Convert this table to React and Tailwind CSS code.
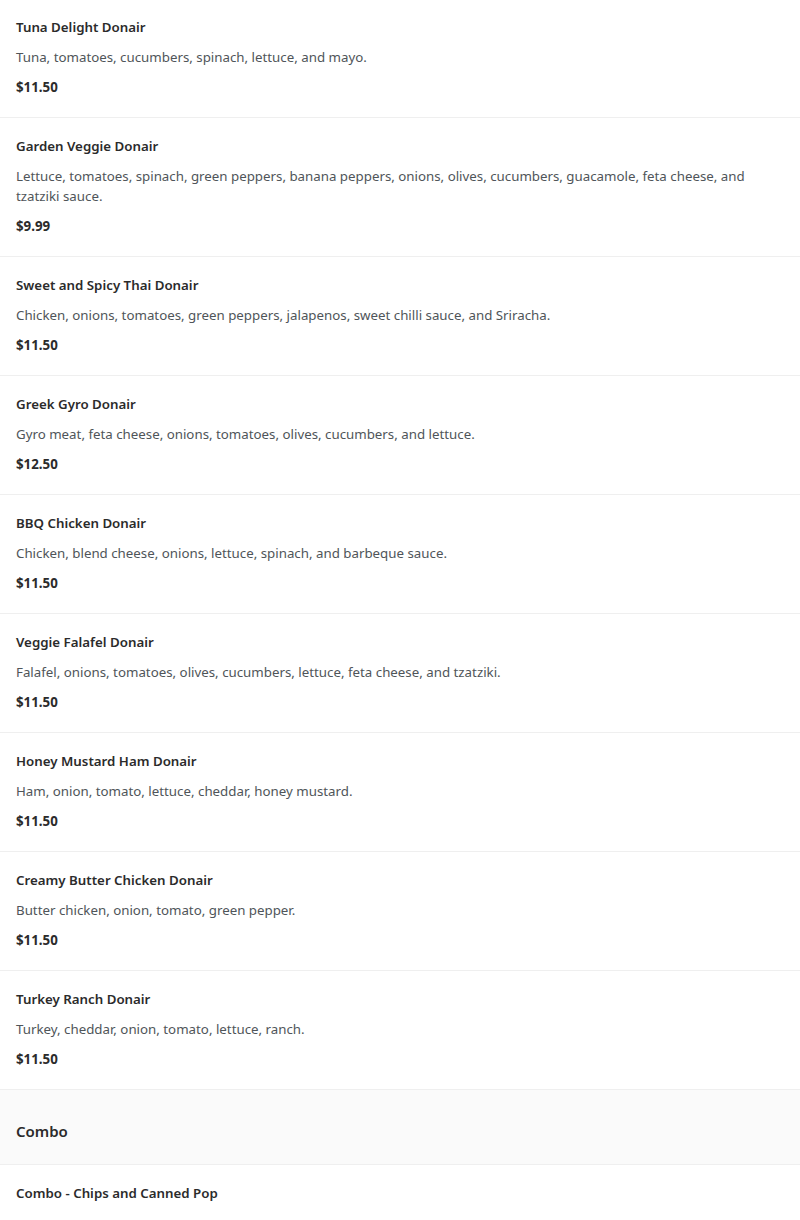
const items = [
  { name: "Tuna Delight Donair", desc: "Tuna, tomatoes, cucumbers, spinach, lettuce, and mayo.", price: "$11.50" },
  { name: "Garden Veggie Donair", desc: "Lettuce, tomatoes, spinach, green peppers, banana peppers, onions, olives, cucumbers, guacamole, feta cheese, and tzatziki sauce.", price: "$9.99" },
  { name: "Sweet and Spicy Thai Donair", desc: "Chicken, onions, tomatoes, green peppers, jalapenos, sweet chilli sauce, and Sriracha.", price: "$11.50" },
  { name: "Greek Gyro Donair", desc: "Gyro meat, feta cheese, onions, tomatoes, olives, cucumbers, and lettuce.", price: "$12.50" },
  { name: "BBQ Chicken Donair", desc: "Chicken, blend cheese, onions, lettuce, spinach, and barbeque sauce.", price: "$11.50" },
  { name: "Veggie Falafel Donair", desc: "Falafel, onions, tomatoes, olives, cucumbers, lettuce, feta cheese, and tzatziki.", price: "$11.50" },
  { name: "Honey Mustard Ham Donair", desc: "Ham, onion, tomato, lettuce, cheddar, honey mustard.", price: "$11.50" },
  { name: "Creamy Butter Chicken Donair", desc: "Butter chicken, onion, tomato, green pepper.", price: "$11.50" },
  { name: "Turkey Ranch Donair", desc: "Turkey, cheddar, onion, tomato, lettuce, ranch.", price: "$11.50" },
];

function MenuItem({ name, desc, price }) {
  return (
    <div className="border-b border-[#efefef] px-4 pt-[18px] pb-5 flex flex-col gap-[10px]">
      <div className="text-[13.3px] leading-5 font-semibold text-[#2b2b2b]">{name}</div>
      <div className="text-[13.3px] leading-5 text-[#4f5559]">{desc}</div>
      <div className="text-[13.3px] leading-5 font-bold text-[#2b2b2b]">{price}</div>
    </div>
  );
}

export default function App() {
  return (
    <div className="w-[800px] h-[1220px] overflow-hidden bg-white" style={{ fontFamily: '"Noto Sans", "Open Sans", sans-serif' }}>
      <div className="-mt-px">
        {items.map((it) => (
          <MenuItem key={it.name} {...it} />
        ))}
      </div>
      <div className="h-[75px] bg-[#fafafa] border-b border-[#efefef] px-4 pt-2 flex items-center">
        <span className="text-[15px] font-semibold text-[#2b2b2b]">Combo</span>
      </div>
      <div className="px-4 pt-[18px] flex flex-col gap-[10px]">
        <div className="text-[13.3px] leading-5 font-semibold text-[#2b2b2b]">Combo - Chips and Canned Pop</div>
        <div className="h-5 flex items-center">
          <div className="w-10 h-3 mt-2 rounded-sm bg-[#f4f4f4]" />
        </div>
      </div>
    </div>
  );
}
